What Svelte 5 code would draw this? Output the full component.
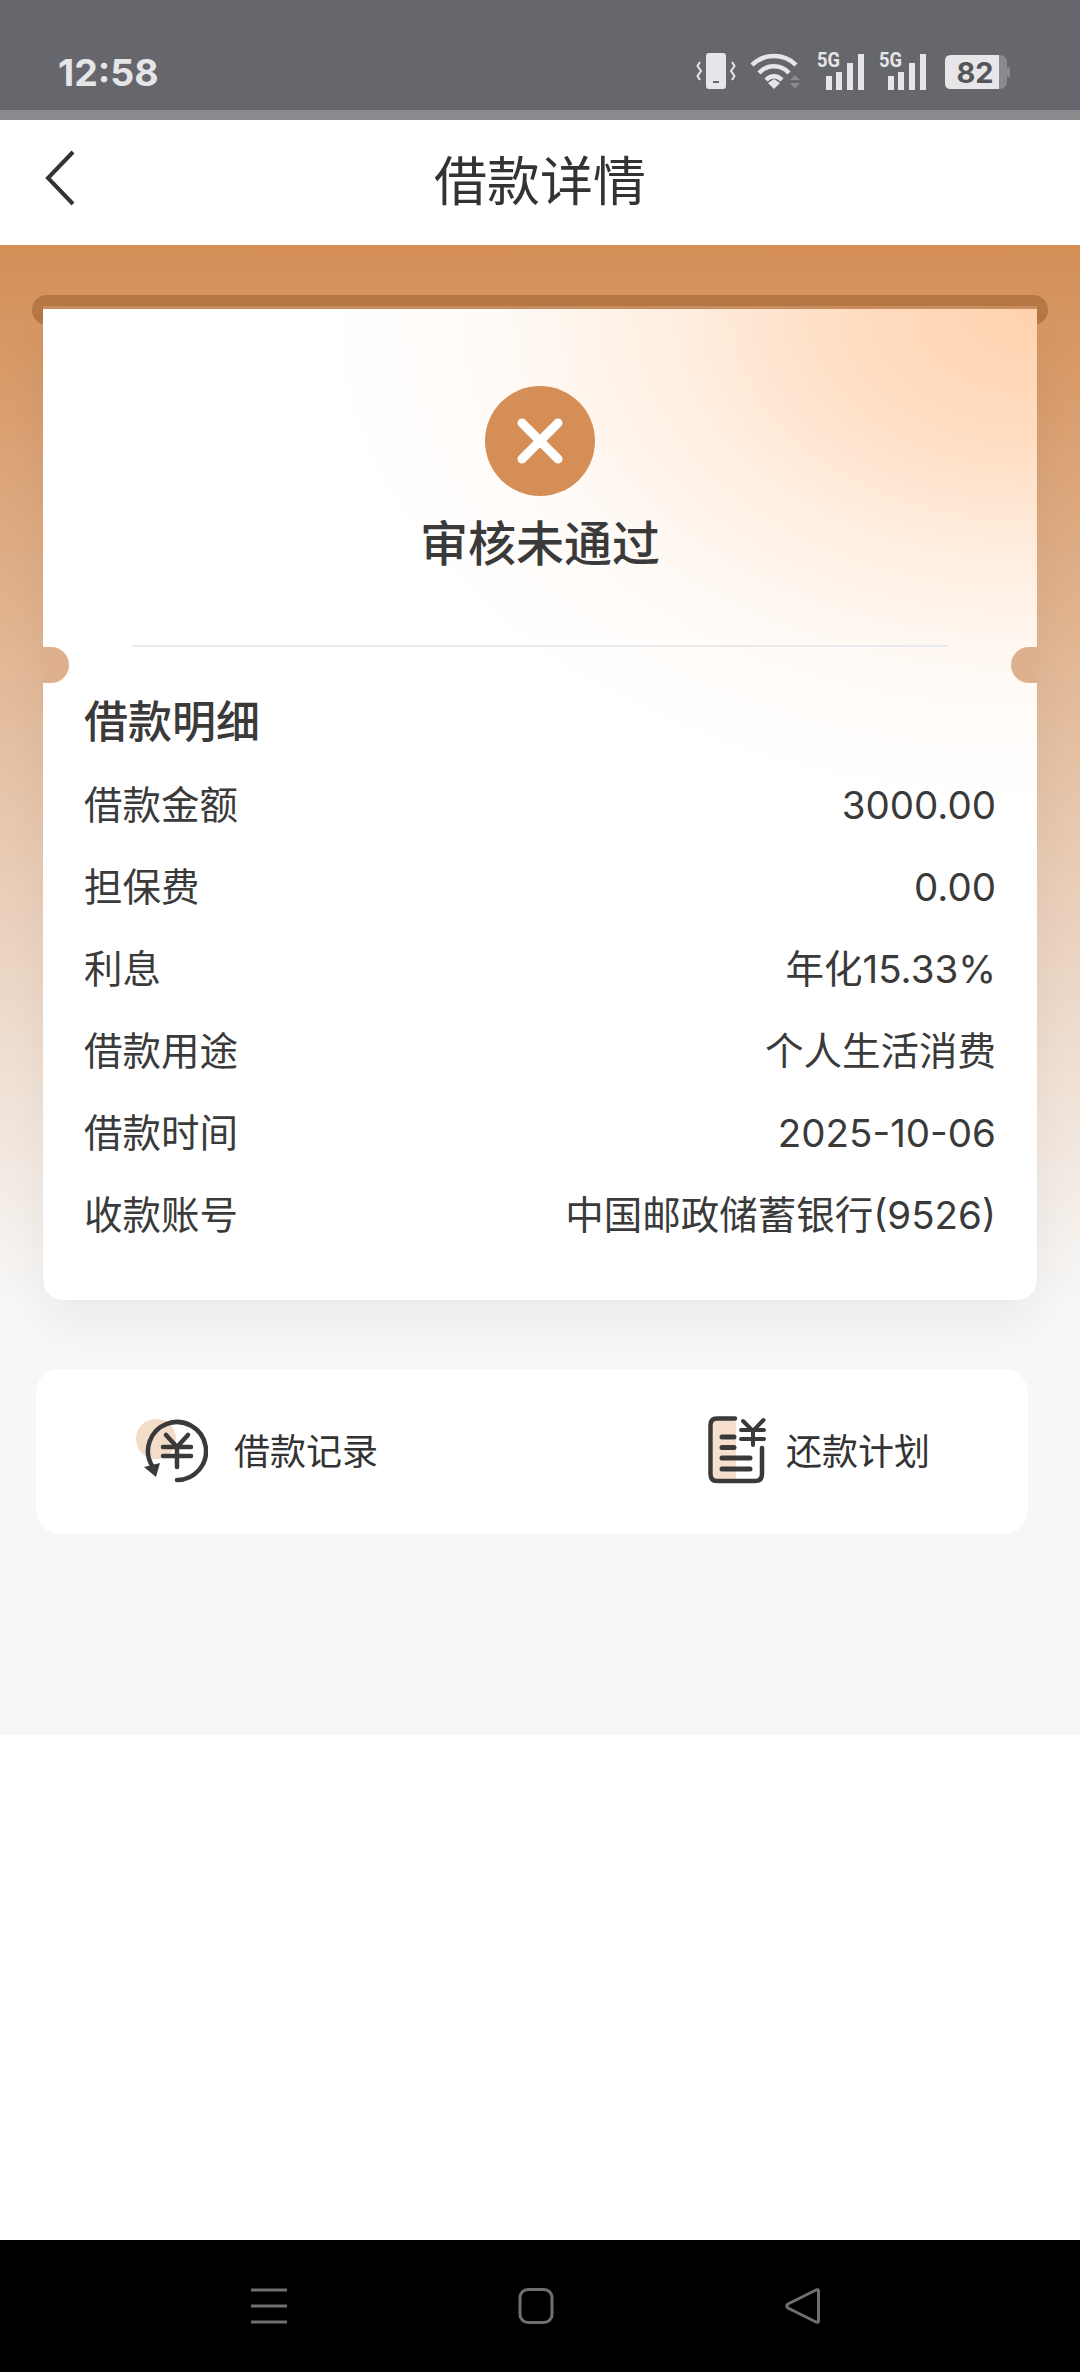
<script lang="ts">
	const rows = [
		{ label: '借款金额', value: '3000.00' },
		{ label: '担保费', value: '0.00' },
		{ label: '利息', value: '年化15.33%' },
		{ label: '借款用途', value: '个人生活消费' },
		{ label: '借款时间', value: '2025-10-06' },
		{ label: '收款账号', value: '中国邮政储蓄银行(9526)' }
	];
</script>

<div class="page">
	<div class="status-bar">
		<span class="time">12:58</span>
		<div class="status-icons">
			<svg width="40" height="38" viewBox="0 0 40 38">
				<rect x="10" y="1" width="20" height="36" rx="3" fill="#e6e6e8" />
				<rect x="17" y="29" width="6" height="2" fill="#66676c" />
				<path d="M4 10 L1.5 14 L5 19 L1.5 24 L4 28 M36 10 L38.5 14 L35 19 L38.5 24 L36 28" fill="none" stroke="#e6e6e8" stroke-width="2" />
			</svg>
			<svg width="52" height="38" viewBox="0 0 52 38" class="wifi">
				<path d="M2 13 C14 1 34 1 46 13" fill="none" stroke="#e6e6e8" stroke-width="4.5" />
				<path d="M9 21 C17 12 31 12 39 21" fill="none" stroke="#e6e6e8" stroke-width="4.5" />
				<path d="M16 28 C21 23 27 23 32 28" fill="none" stroke="#e6e6e8" stroke-width="4.5" />
				<path d="M18 31 L24 27 L30 31 L24 37 Z" fill="#e6e6e8" />
				<path d="M40 28 L45 23 L50 28 Z M40 31 L50 31 L45 37 Z" fill="#8b8b8f" />
			</svg>
			{#each [0, 1] as sim}
				<svg width="48" height="46" viewBox="0 -8 48 46" data-sim={sim}>
					<text x="0" y="15" class="net" textLength="23" lengthAdjust="spacingAndGlyphs">5G</text>
					<rect x="9" y="24" width="6" height="14" fill="#e6e6e8" />
					<rect x="19" y="20" width="6" height="18" fill="#e6e6e8" />
					<rect x="30" y="11" width="6" height="27" fill="#e6e6e8" />
					<rect x="41" y="2" width="6" height="36" fill="#e6e6e8" />
				</svg>
			{/each}
			<svg width="66" height="36" viewBox="0 0 66 36" class="battery">
				<path d="M7 1 H55 Q63 1 63 9 V27 Q63 35 55 35 H7 Q1 35 1 29 V7 Q1 1 7 1 Z" fill="#8b8b8f" />
				<path d="M7 1 H55 V35 H7 Q1 35 1 29 V7 Q1 1 7 1 Z" fill="#e6e6e8" />
				<rect x="63" y="13" width="3" height="10" rx="1.5" fill="#8b8b8f" />
				<text x="31" y="29" text-anchor="middle" class="level">82</text>
			</svg>
		</div>
	</div>
	<div class="status-edge"></div>

	<header class="header">
		<svg class="back" width="30" height="56" viewBox="0 0 30 56">
			<path d="M28 2 L3 28 L28 54" fill="none" stroke="#333" stroke-width="4" />
		</svg>
		<h1>借款详情</h1>
	</header>

	<main class="main">
		<div class="ticket">
			<div class="roller"></div>
			<section class="card">
				<span class="notch left"></span>
				<span class="notch right"></span>
				<div class="result">
					<div class="result-icon">
						<svg width="56" height="56" viewBox="0 0 56 56">
							<path d="M10 10 L46 46 M46 10 L10 46" stroke="#fff" stroke-width="9" stroke-linecap="round" />
						</svg>
					</div>
					<div class="result-text">审核未通过</div>
				</div>
				<div class="divider"></div>
				<div class="details">
					<h2>借款明细</h2>
					{#each rows as row}
						<div class="row">
							<span>{row.label}</span>
							<span>{row.value}</span>
						</div>
					{/each}
				</div>
			</section>
		</div>

		<div class="links">
			<div class="link">
				<svg width="72" height="72" viewBox="0 0 72 72">
					<circle cx="20" cy="25" r="20" fill="#f3dcc8" />
					<path d="M41 66 A29 29 0 1 0 16.2 52" fill="none" stroke="#3a3a3a" stroke-width="4.5" stroke-linecap="round" />
					<path d="M8 53 L24 49 L20 63 Z" fill="#3a3a3a" />
					<path d="M30 21 L41 33 L52 21 M27 33 H55 M27 42 H55 M41 33 V53" fill="none" stroke="#3a3a3a" stroke-width="4.5" stroke-linecap="round" />
				</svg>
				<span>借款记录</span>
			</div>
			<div class="link">
				<svg width="60" height="72" viewBox="0 0 60 72">
					<rect x="6" y="4" width="23" height="62" fill="#f6dfcc" />
					<path d="M28 4.5 H10 Q3.5 4.5 3.5 11 V60 Q3.5 67 10 67 H48 Q55 67 55 60 V34" fill="none" stroke="#3a3a3a" stroke-width="4.5" stroke-linecap="round" />
					<path d="M15 23 H27 M15 33.500 H27 M15 44 H43 M15 55 H43" fill="none" stroke="#3a3a3a" stroke-width="5" stroke-linecap="round" />
					<path d="M36 7 L46 17 L56.500 6 M34 16 H57 M34 25 H57 M46 17 V31" fill="none" stroke="#3a3a3a" stroke-width="4" stroke-linecap="round" />
				</svg>
				<span>还款计划</span>
			</div>
		</div>
	</main>

	<div class="blank"></div>

	<nav class="nav-bar">
		<svg width="36" height="36" viewBox="0 0 36 36">
			<path d="M0 2 H36 M0 18 H36 M0 34 H36" stroke="#6f6f6f" stroke-width="3" />
		</svg>
		<svg width="36" height="36" viewBox="0 0 36 36">
			<rect x="2" y="1.500" width="32" height="33" rx="8" fill="none" stroke="#6f6f6f" stroke-width="3" />
		</svg>
		<svg width="36" height="36" viewBox="0 0 36 36">
			<path d="M33.500 3 V33 Q33.500 35 31 34 L3 20 Q0.500 18 3 16 L31 2 Q33.500 1 33.500 3 Z" fill="none" stroke="#6f6f6f" stroke-width="3" />
		</svg>
	</nav>
</div>

<style>
	:global(body) {
		margin: 0;
		background: #fff;
	}

	.page {
		display: flex;
		flex-direction: column;
		width: 1080px;
		height: 2372px;
		overflow: hidden;
		font-family: 'Inter', 'Noto Sans CJK SC', sans-serif;
		color: #333;
	}

	.status-bar {
		display: flex;
		align-items: center;
		justify-content: space-between;
		box-sizing: border-box;
		height: 110px;
		padding: 34px 70px 0 58px;
		background: #66676c;
	}

	.time {
		font-size: 37.5px;
		font-weight: 700;
		color: #e6e6e8;
	}

	.status-icons {
		display: flex;
		align-items: flex-end;
		align-self: flex-end;
		gap: 14px;
		margin-bottom: 20px;
	}

	.status-icons .wifi {
		margin-right: 1px;
	}

	.status-icons .battery {
		margin-left: 3px;
	}

	.net {
		font-family: 'Roboto', sans-serif;
		font-size: 21px;
		font-weight: 700;
		fill: #e6e6e8;
	}

	.level {
		font-family: 'Inter', sans-serif;
		font-size: 29px;
		font-weight: 700;
		fill: #55565a;
	}

	.status-edge {
		height: 10px;
		background: #8b8b8f;
	}

	.header {
		position: relative;
		display: flex;
		align-items: center;
		justify-content: center;
		height: 125px;
		padding-bottom: 10px;
		box-sizing: border-box;
		background: #fff;
	}

	.header h1 {
		margin: 0;
		font-size: 53px;
		font-weight: 400;
		color: #333;
	}

	.back {
		position: absolute;
		left: 45px;
		top: 30px;
	}

	.main {
		display: flex;
		flex-direction: column;
		height: 1490px;
		box-sizing: border-box;
		padding-top: 50px;
		background: linear-gradient(#d48e56 0, #f7f7f7 1060px);
	}

	.ticket {
		position: relative;
		padding: 14px 43px 0;
	}

	.roller {
		position: absolute;
		top: 0;
		left: 32px;
		right: 32px;
		height: 30px;
		border-radius: 15px;
		background: #b57844;
	}

	.card {
		position: relative;
		height: 991px;
		padding-top: 77px;
		box-sizing: border-box;
		border-radius: 0 0 20px 20px;
		background:
			radial-gradient(
				ellipse 720px 500px at top right,
				#ffd2ae 0,
				rgba(255, 210, 174, 0.78) 25%,
				rgba(255, 210, 174, 0.38) 50%,
				rgba(255, 210, 174, 0.1) 75%,
				rgba(255, 210, 174, 0) 100%
			),
			#fff;
		box-shadow: 0 -3px 0 #c98e60, 0 24px 44px rgba(0, 0, 0, 0.05);
	}

	.notch {
		position: absolute;
		top: 338px;
		width: 26px;
		height: 36px;
		background: #deb08e;
	}

	.notch.left {
		left: 0;
		border-radius: 0 18px 18px 0;
	}

	.notch.right {
		right: 0;
		border-radius: 18px 0 0 18px;
	}

	.result {
		display: flex;
		flex-direction: column;
		align-items: center;
		gap: 18px;
	}

	.result-icon {
		display: flex;
		align-items: center;
		justify-content: center;
		width: 110px;
		height: 110px;
		border-radius: 50%;
		background: #d48e56;
	}

	.result-text {
		font-size: 48px;
		font-weight: 500;
		line-height: 60px;
		color: #3a3a3a;
	}

	.divider {
		height: 2px;
		margin: 71px 89px 0;
		background: #ebebee;
	}

	.details {
		padding: 45px 41px 0 41px;
	}

	.details h2 {
		margin: 0 0 13px;
		font-size: 44px;
		font-weight: 500;
		line-height: 60px;
		color: #3a3a3a;
	}

	.row {
		display: flex;
		align-items: center;
		justify-content: space-between;
		box-sizing: border-box;
		height: 82px;
		padding-bottom: 2px;
		font-size: 38.5px;
		line-height: 56px;
		color: #3a3a3a;
	}

	.links {
		display: flex;
		align-items: center;
		justify-content: space-between;
		height: 165px;
		margin: 69px 52px 0 36px;
		padding: 0 98px 3px 100px;
		box-sizing: border-box;
		border-radius: 24px;
		background: #fff;
	}

	.link {
		display: flex;
		align-items: center;
		gap: 26px;
		font-size: 36px;
		color: #333;
	}

	.link span {
		margin-bottom: 3px;
	}

	.link:last-child {
		gap: 19px;
	}

	.blank {
		flex: 1;
		background: #fff;
	}

	.nav-bar {
		display: flex;
		align-items: center;
		justify-content: center;
		gap: 231px;
		height: 132px;
		padding-right: 9px;
		background: #000;
	}
</style>
